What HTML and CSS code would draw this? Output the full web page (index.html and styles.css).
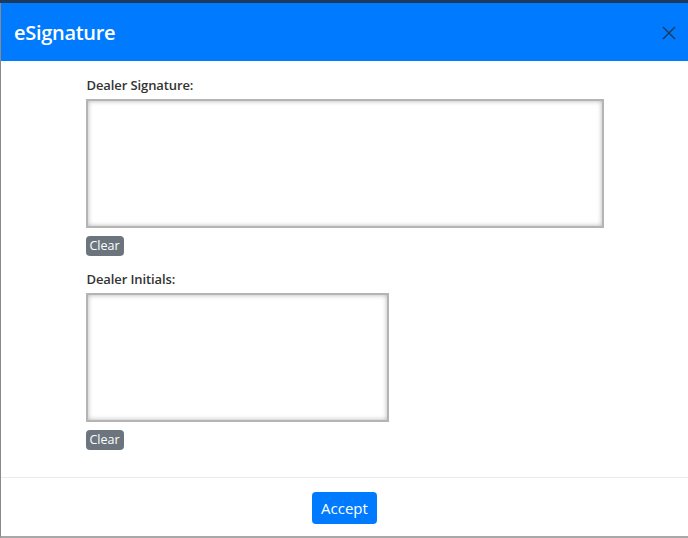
FILE: index.html
```html
<!DOCTYPE html>
<html>
<head>
<meta charset="utf-8">
<link rel="stylesheet" href="styles.css">
</head>
<body>
<div class="modal">
  <div class="modal-header">
    <h5 class="modal-title">eSignature</h5>
    <button class="close" aria-label="Close">
      <svg width="14" height="14" viewBox="0 0 14 14"><path d="M1 1L13 13M13 1L1 13" stroke="#1d3b5e" stroke-width="1.5" fill="none"/></svg>
    </button>
  </div>
  <div class="modal-body">
    <div class="sig-column">
      <label class="sig-label">Dealer Signature:</label>
      <div class="pad pad-wide"></div>
      <button class="btn-clear">Clear</button>
      <label class="sig-label">Dealer Initials:</label>
      <div class="pad pad-narrow"></div>
      <button class="btn-clear">Clear</button>
    </div>
  </div>
  <div class="modal-footer">
    <button class="btn-accept">Accept</button>
  </div>
</div>
</body>
</html>
```
FILE: styles.css
```css
html, body {
  margin: 0;
  padding: 0;
  height: 100%;
}
body {
  background: #1b3a5e;
  font-family: "Open Sans", "Noto Sans", sans-serif;
  padding-top: 3px;
  box-sizing: border-box;
  overflow: hidden;
}
.modal {
  height: 533px;
  background: #fff;
  border-left: 1px solid #8a8a8a;
  border-bottom: 2px solid #a8a8a8;
  display: flex;
  flex-direction: column;
}
.modal-header {
  height: 58px;
  background: #007bff;
  display: flex;
  align-items: center;
  justify-content: space-between;
  padding: 0 12px 0 13px;
  flex: none;
}
.modal-title {
  margin: 0;
  color: #fff;
  font-size: 20px;
  font-weight: 600;
  letter-spacing: -0.3px;
}
.close {
  background: none;
  border: 0;
  padding: 0;
  margin-top: 2px;
  display: flex;
}
.modal-body {
  flex: 1;
  display: flex;
  justify-content: center;
  padding-top: 15px;
}
.sig-column {
  width: 518px;
  display: flex;
  flex-direction: column;
  align-items: flex-start;
}
.sig-label {
  font-size: 13px;
  font-weight: 600;
  color: #333;
  margin-left: 1px;
  line-height: 18px;
  margin-bottom: 5px;
  letter-spacing: -0.1px;
}
.pad {
  height: 129px;
  box-sizing: border-box;
  border: 2px solid #b4b4b4;
  box-shadow: inset 0 0 5px rgba(0,0,0,0.3);
  background: #fff;
}
.pad-wide { width: 518px; }
.pad-narrow { width: 303px; }
.btn-clear {
  margin-top: 8px;
  margin-bottom: 14px;
  background: #6c757d;
  color: #fff;
  border: 0;
  border-radius: 4px;
  font-family: inherit;
  font-size: 12.5px;
  height: 20px;
  padding: 0 4px;
  line-height: 20px;
}
.modal-footer {
  flex: none;
  height: 59px;
  box-sizing: border-box;
  border-top: 1px solid #e9ecef;
  display: flex;
  justify-content: center;
  align-items: flex-start;
  padding-top: 14px;
}
.btn-accept {
  background: #007bff;
  color: #fff;
  border: 0;
  border-radius: 4px;
  font-family: inherit;
  font-size: 15px;
  height: 32px;
  padding: 0 9px;
}
```
